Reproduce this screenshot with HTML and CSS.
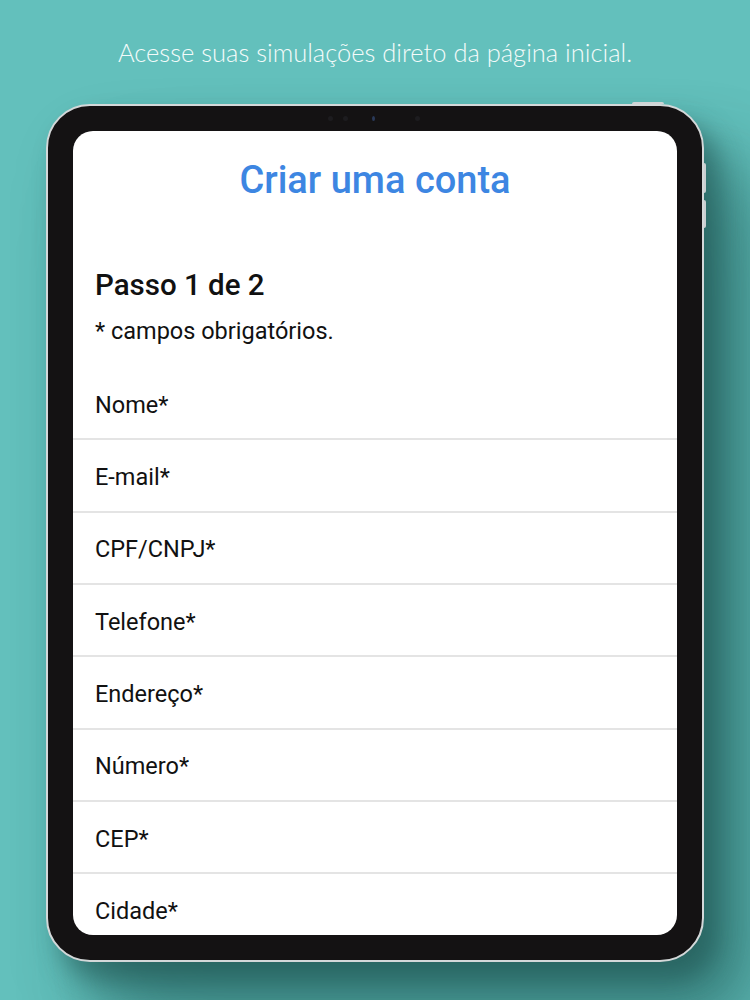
FILE: index.html
```html
<!DOCTYPE html>
<html lang="pt-BR">
<head>
<meta charset="utf-8">
<title>Criar uma conta</title>
<link rel="stylesheet" href="styles.css">
</head>
<body>
<div class="page">
  <p class="caption">Acesse suas simulações direto da página inicial.</p>
  <div class="device">
    <span class="btn-top"></span>
    <span class="btn-side btn-side-1"></span>
    <span class="btn-side btn-side-2"></span>
    <div class="cams">
      <span class="cam"></span><span class="cam"></span><span class="cam cam-lens"></span><span class="cam cam-far"></span>
    </div>
    <div class="screen">
      <h1 class="title">Criar uma conta</h1>
      <h2 class="step">Passo 1 de 2</h2>
      <p class="note">* campos obrigatórios.</p>
      <ul class="fields">
        <li class="field">Nome*</li>
        <li class="field">E-mail*</li>
        <li class="field">CPF/CNPJ*</li>
        <li class="field">Telefone*</li>
        <li class="field">Endereço*</li>
        <li class="field">Número*</li>
        <li class="field">CEP*</li>
        <li class="field">Cidade*</li>
      </ul>
    </div>
  </div>
</div>
</body>
</html>
```
FILE: styles.css
```css
html, body {
  margin: 0;
  padding: 0;
}
body {
  background: #63c0bc;
  width: 750px;
  height: 1000px;
  overflow: hidden;
}
.page {
  width: 750px;
  height: 1000px;
  padding-top: 36px;
  box-sizing: border-box;
  background: #63c0bc;
}
.caption {
  margin: 0;
  text-align: center;
  color: #f4fbfa;
  font-family: "Lato", "Open Sans", sans-serif;
  font-weight: 300;
  font-size: 25.5px;
  line-height: 32px;
}
.device {
  position: relative;
  margin: 36px 0 0 46px;
  width: 658px;
  height: 858px;
  box-sizing: border-box;
  border: 2px solid #d4d8d9;
  border-radius: 44px;
  background: #141213;
  padding: 25px;
  box-shadow: 14px 18px 24px rgba(30, 80, 78, 0.5), 36px 46px 60px rgba(30, 90, 86, 0.5), 70px 80px 90px rgba(40, 100, 96, 0.35);
}
.btn-top {
  position: absolute;
  top: -4px;
  right: 38px;
  width: 32px;
  height: 2px;
  border-radius: 2px 2px 0 0;
  background: #cfd4d6;
}
.btn-side {
  position: absolute;
  right: -4px;
  width: 2px;
  border-radius: 0 2px 2px 0;
  background: #c9cfd1;
}
.btn-side-1 { top: 57px; height: 30px; }
.btn-side-2 { top: 94px; height: 28px; }
.cams {
  position: absolute;
  top: 10px;
  left: 280px;
  display: flex;
  gap: 10px;
  align-items: center;
}
.cam {
  width: 5px;
  height: 5px;
  border-radius: 50%;
  background: #1d1c1f;
}
.cam-lens {
  background: #2a3a5a;
  width: 3px;
  height: 5px;
  margin-left: 14px;
}
.cam-far { margin-left: 30px; }
.screen {
  width: 100%;
  height: 100%;
  background: #ffffff;
  border-radius: 20px;
  overflow: hidden;
  font-family: "Roboto", "Liberation Sans", sans-serif;
  color: #111111;
}
.title {
  margin: 0;
  padding-top: 27px;
  text-align: center;
  font-size: 38px;
  line-height: 44px;
  font-weight: 500;
  color: #3d86e2;
}
.step {
  margin: 67px 0 0;
  padding-left: 22px;
  font-size: 29.5px;
  line-height: 32px;
  font-weight: 500;
  color: #111111;
}
.note {
  margin: 16px 0 0;
  padding-left: 22px;
  font-size: 23.5px;
  line-height: 28px;
}
.fields {
  list-style: none;
  margin: 23px 0 0;
  padding: 0;
}
.field {
  height: 72.33px;
  box-sizing: border-box;
  display: flex;
  align-items: center;
  padding: 3px 22px 0;
  border-bottom: 2px solid #e4e4e4;
  font-size: 23.5px;
}
```
